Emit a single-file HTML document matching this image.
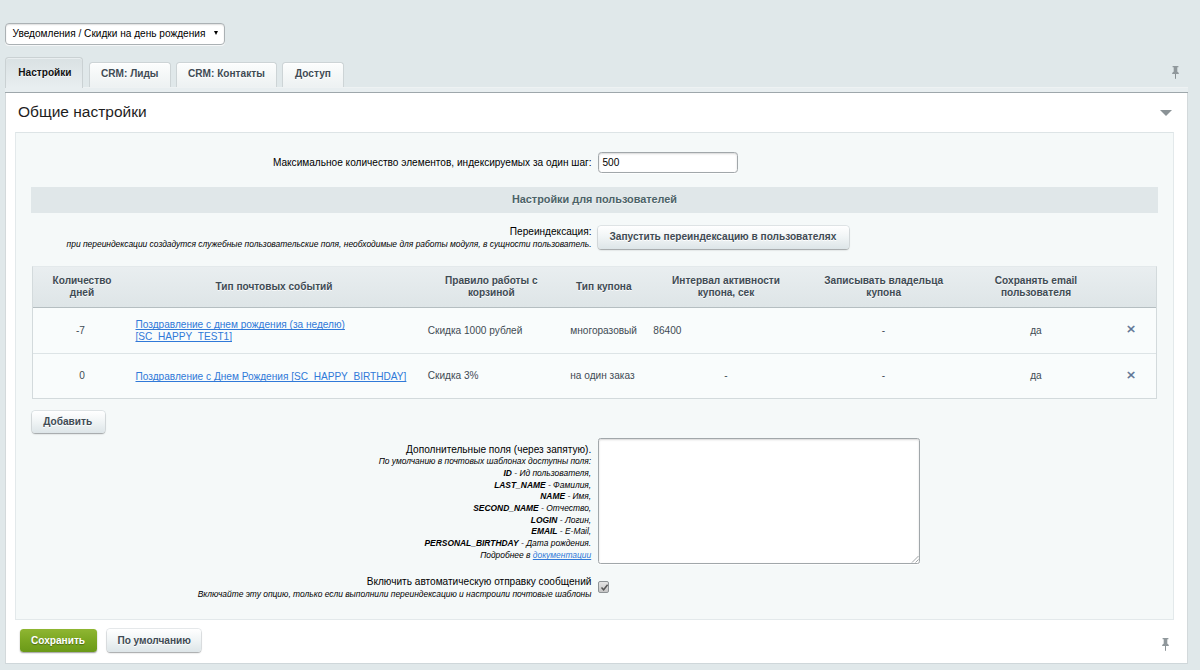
<!DOCTYPE html>
<html lang="ru">
<head>
<meta charset="utf-8">
<title>Настройки модуля</title>
<style>
*{box-sizing:border-box}
html,body{margin:0;padding:0}
body{width:1200px;height:670px;overflow:hidden;background:#e0e8ea;font-family:"Liberation Sans",Arial,Helvetica,sans-serif;font-size:10.1px;color:#000;position:relative}
.abs,.t{position:absolute;white-space:nowrap}
.t{line-height:12px;height:12px}
.b{font-weight:bold}
.c{text-align:center}
.r{text-align:right}
.sm{font-size:8.43px;font-style:italic}
.gr{color:#3f4b54}
a{color:#3079d8;text-decoration:underline;text-decoration-skip-ink:none;text-decoration-thickness:.8px;text-underline-offset:1px}

.sel{left:5px;top:23px;width:220px;height:21.5px;border:1px solid #abb1b4;border-radius:4px;background:#fff;box-shadow:0 1px 0 rgba(255,255,255,.7), inset 0 1px 1.5px rgba(0,0,0,.13)}
.arr{left:213.900px;top:31.200px;width:0;height:0;border-left:2.9px solid transparent;border-right:2.9px solid transparent;border-top:4.600px solid #000}

.tab{border:1px solid #cdd4d6;border-bottom:none;border-radius:3.5px 3.5px 0 0}
.tab.in{top:62px;height:25px;background:linear-gradient(#fcfdfd,#edf1f2);box-shadow:inset 0 1px 0 #fff}
.tab.act{left:5px;top:56.5px;width:78px;height:31.5px;background:linear-gradient(#d9e1e3,#e8eef0);border-color:#cad1d3;box-shadow:inset 0 1px 0 #e9eef0}
.band{left:5px;top:87px;width:1183px;height:5.2px;background:#e8eef0;border-top:1px solid #f1f5f6}
.band2{left:83px;top:86.5px;width:1105px;height:1px;background:#eef2f3}
.dark{left:5px;top:92px;width:1183px;height:1.2px;background:#9ea7ab}

.panel{left:5px;top:93px;width:1183px;height:570.5px;background:#fff;border-left:1px solid #d3d9db;border-right:1px solid #d3d9db;border-bottom:1px solid #cfd7da}
.title{left:18px;top:101.9px;font-size:15.5px;line-height:20px;height:20px;color:#1d1d1d}
.tri{left:1159.6px;top:109.8px;width:0;height:0;border-left:6.3px solid transparent;border-right:6.3px solid transparent;border-top:6.3px solid #8a9296}
.inner{left:15px;top:132px;width:1158.5px;height:487.5px;background:#f5f9f9;border:1px solid #e3e9eb;border-top-color:#dde4e6}

.inp{background:#fff;border:1px solid #a1a7aa;border-radius:3.5px;box-shadow:inset 0 1px 2px rgba(0,0,0,.16), 0 1px 0 rgba(255,255,255,.8)}
.heading{left:31px;top:187px;width:1126.5px;height:26px;background:#e0e7e9}
.btn{border-radius:3.5px;background:linear-gradient(#ffffff,#f1f5f6 45%,#dde5e8);box-shadow:0 1px 1.5px rgba(0,0,0,.3), 0 0 0 1px rgba(170,180,185,.28)}
.btn.green{background:linear-gradient(#8fb632,#7ba722 50%,#6a9918);box-shadow:0 1px 1.5px rgba(0,0,0,.4)}
.btxt{font-weight:bold;color:#3f4b54;text-shadow:0 1px 0 #fff}

.grid{left:32px;top:266px;width:1124.5px;height:132.5px;background:#f9fcfc;border:1px solid #d3dadc;border-top-color:#e3e9eb}
.ghead{left:33px;top:266.5px;width:1122.5px;height:40px;background:linear-gradient(#e9eef0,#dee5e7)}
.gline{left:33px;width:1122.5px;height:1px}
.th{font-weight:bold;color:#3f4b54;text-align:center;text-shadow:0 1px 0 rgba(255,255,255,.8);line-height:11.7px}
.x{color:#5a7393;font-size:15.500px;line-height:12px;-webkit-text-stroke:.35px #5a7393}
</style>
</head>
<body>
<!-- module selector -->
<div class="abs sel"></div>
<div class="t" style="left:12.6px;top:28.400px">Уведомления / Скидки на день рождения</div>
<div class="abs arr"></div>

<!-- tabs -->
<div class="abs band"></div>
<div class="abs band2"></div>
<div class="abs tab act"></div>
<div class="abs tab in" style="left:89px;width:82px"></div>
<div class="abs tab in" style="left:176px;width:100.5px"></div>
<div class="abs tab in" style="left:282px;width:61.5px"></div>
<div class="t b" style="left:18.3px;top:67.2px;color:#111;text-shadow:0 1px 0 rgba(255,255,255,.7)">Настройки</div>
<div class="t b gr" style="left:101px;top:68.2px;text-shadow:0 1px 0 #fff">CRM: Лиды</div>
<div class="t b gr" style="left:188px;top:68.2px;text-shadow:0 1px 0 #fff">CRM: Контакты</div>
<div class="t b gr" style="left:295px;top:68.2px;text-shadow:0 1px 0 #fff">Доступ</div>
<div class="abs dark"></div>
<svg class="abs" style="left:1171.9px;top:66.2px" width="7" height="13" viewBox="0 0 7 13"><path d="M.6 0h5.800v1.200h-1.100v4.600c1.100.4 1.600 1.200 1.600 2.300h-6.800c0-1.100.5-1.900 1.600-2.300v-4.600h-1.100z" fill="#90989c"/><rect x="3.050" y="8" width=".9" height="4.800" fill="#7f878b"/></svg>

<!-- panel -->
<div class="abs panel"></div>
<div class="t title">Общие настройки</div>
<div class="abs tri"></div>
<div class="abs inner"></div>

<!-- row 1 -->
<div class="t r" style="right:608.500px;top:156.5px">Максимальное количество элементов, индексируемых за один шаг:</div>
<div class="abs inp" style="left:598px;top:152px;width:140px;height:20.5px"></div>
<div class="t" style="left:602.5px;top:156.5px">500</div>

<!-- heading -->
<div class="abs heading"></div>
<div class="t b c" style="left:31px;width:1127px;top:192.8px;font-size:10.87px;color:#4b6267;text-shadow:0 1px 0 rgba(255,255,255,.6)">Настройки для пользователей</div>

<!-- row 2 -->
<div class="t r" style="right:608.500px;top:226.3px">Переиндексация:</div>
<div class="t r sm" style="right:608.500px;top:238.1px">при переиндексации создадутся служебные пользовательские поля, необходимые для работы модуля, в сущности пользователь.</div>
<div class="abs btn" style="left:597.5px;top:226px;width:251.5px;height:22.5px"></div>
<div class="t btxt" style="left:609.5px;top:231px">Запустить переиндексацию в пользователях</div>

<!-- grid -->
<div class="abs grid"></div>
<div class="abs ghead"></div>
<div class="abs gline" style="top:306.500px;background:#b5bec1"></div>
<div class="abs gline" style="top:352.800px;background:#dde4e6"></div>

<div class="t th" style="left:42px;width:80px;top:274.800px;height:auto">Количество<br>дней</div>
<div class="t th" style="left:174px;width:200px;top:280.600px">Тип почтовых событий</div>
<div class="t th" style="left:421.300px;width:140px;top:274.800px;height:auto">Правило работы с<br>корзиной</div>
<div class="t th" style="left:553.800px;width:100px;top:280.600px">Тип купона</div>
<div class="t th" style="left:646px;width:160px;top:274.800px;height:auto">Интервал активности<br>купона, сек</div>
<div class="t th" style="left:803.700px;width:160px;top:274.800px;height:auto">Записывать владельца<br>купона</div>
<div class="t th" style="left:966px;width:140px;top:274.800px;height:auto">Сохранять email<br>пользователя</div>

<!-- data row 1 -->
<div class="t c gr" style="left:60.5px;width:40px;top:324.800px">-7</div>
<div class="t" style="left:135.500px;top:319.300px;line-height:11.9px;height:auto"><a>Поздравление с днем рождения (за неделю)<br>[SC_HAPPY_TEST1]</a></div>
<div class="t gr" style="left:427.700px;top:324.700px">Скидка 1000 рублей</div>
<div class="t gr" style="left:570.300px;top:324.700px">многоразовый</div>
<div class="t gr" style="left:653.300px;top:324.700px">86400</div>
<div class="t c gr" style="left:863.500px;width:40px;top:324.700px">-</div>
<div class="t c gr" style="left:1016px;width:40px;top:324.700px">да</div>
<div class="t c x" style="left:1121px;width:20px;top:323.1px">×</div>

<!-- data row 2 -->
<div class="t c gr" style="left:62px;width:40px;top:370px">0</div>
<div class="t" style="left:135.500px;top:370.500px"><a>Поздравление с Днем Рождения [SC_HAPPY_BIRTHDAY]</a></div>
<div class="t gr" style="left:427.700px;top:370px">Скидка 3%</div>
<div class="t gr" style="left:570.300px;top:370px">на один заказ</div>
<div class="t c gr" style="left:706px;width:40px;top:370px">-</div>
<div class="t c gr" style="left:863.500px;width:40px;top:370px">-</div>
<div class="t c gr" style="left:1016px;width:40px;top:370px">да</div>
<div class="t c x" style="left:1121px;width:20px;top:368.7px">×</div>

<!-- add button -->
<div class="abs btn" style="left:32px;top:410.500px;width:72.500px;height:22.500px"></div>
<div class="t btxt" style="left:43.300px;top:415.500px">Добавить</div>

<!-- additional fields -->
<div class="t r" style="right:608.800px;top:444.300px">Дополнительные поля (через запятую).</div>
<div class="t r sm" style="right:608.800px;top:456.400px;line-height:11.67px;height:auto">По умолчанию в почтовых шаблонах доступны поля:<br>
<b>ID</b> - Ид пользователя,<br>
<b>LAST_NAME</b> - Фамилия,<br>
<b>NAME</b> - Имя,<br>
<b>SECOND_NAME</b> - Отчество,<br>
<b>LOGIN</b> - Логин,<br>
<b>EMAIL</b> - E-Mail,<br>
<b>PERSONAL_BIRTHDAY</b> - Дата рождения.<br>
Подробнее в <a>документации</a></div>
<div class="abs inp" style="left:598px;top:438px;width:321.500px;height:125.500px;border-radius:2.5px"></div>
<svg class="abs" style="left:910.500px;top:554.500px" width="8" height="8" viewBox="0 0 8 8"><path d="M7.500 1L1 7.500M7.500 4.500L4.500 7.500" stroke="#8a8f92" stroke-width=".8" fill="none"/></svg>

<!-- checkbox row -->
<div class="t r" style="right:608.600px;top:576px">Включить автоматическую отправку сообщений</div>
<div class="t r sm" style="right:608.600px;top:588.200px">Включайте эту опцию, только если выполнили переиндексацию и настроили почтовые шаблоны</div>
<div class="abs" style="left:598px;top:581.400px;width:11.400px;height:11.200px;border:1px solid #8e9396;border-radius:2px;background:linear-gradient(#e4e4e4,#c6c6c6)"></div>
<svg class="abs" style="left:599.500px;top:582.800px" width="9" height="9" viewBox="0 0 9 9"><path d="M1.500 4.600L3.600 6.800L7.600 1.800" stroke="#555" stroke-width="1.500" fill="none"/></svg>

<!-- bottom buttons -->
<div class="abs btn green" style="left:20px;top:629.400px;width:77px;height:22.300px"></div>
<div class="t b" style="left:31px;top:634.900px;color:#fff;text-shadow:0 1px 1px rgba(0,0,0,.35)">Сохранить</div>
<div class="abs btn" style="left:107px;top:629.400px;width:94px;height:22.500px"></div>
<div class="t btxt" style="left:117.400px;top:634.900px">По умолчанию</div>
<svg class="abs" style="left:1161.500px;top:637.800px" width="7" height="13" viewBox="0 0 7 13"><path d="M.6 0h5.800v1.200h-1.100v4.600c1.100.4 1.600 1.200 1.600 2.300h-6.800c0-1.100.5-1.900 1.600-2.300v-4.600h-1.100z" fill="#90989c"/><rect x="3.050" y="8" width=".9" height="4.800" fill="#7f878b"/></svg>
</body>
</html>
